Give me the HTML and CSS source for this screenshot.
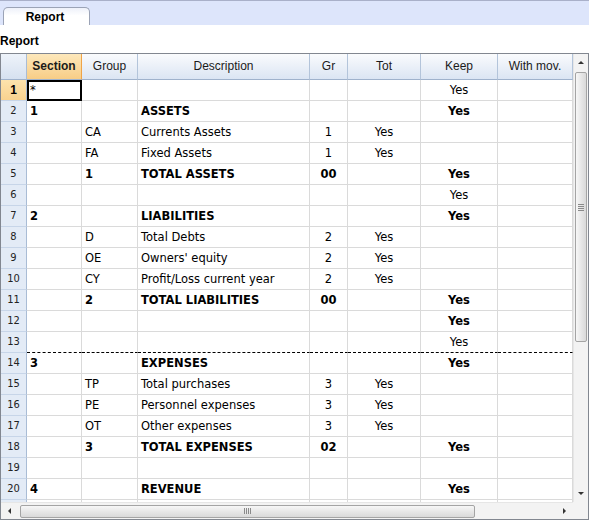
FILE: index.html
```html
<!DOCTYPE html>
<html lang="en">
<head>
    <meta charset="UTF-8">
    <title>Report</title>
    <link rel="stylesheet" href="styles.css">
</head>
<body>
    <div class="tabbar">
        <div class="tab">Report</div>
    </div>
    <div class="title">Report</div>

    <div class="grid">
        <div class="grid-main">
            <div class="sheet">
                <div class="row head">
                    <div class="hcell corner"></div>
                    <div class="hcell active">Section</div>
                    <div class="hcell">Group</div>
                    <div class="hcell">Description</div>
                    <div class="hcell">Gr</div>
                    <div class="hcell">Tot</div>
                    <div class="hcell">Keep</div>
                    <div class="hcell">With mov.</div>
                </div>
                <div class="row"><div class="num sel">1</div><div class="cell current">*</div><div class="cell"></div><div class="cell"></div><div class="cell c"></div><div class="cell c"></div><div class="cell c">Yes</div><div class="cell c"></div></div>
                <div class="row bold"><div class="num">2</div><div class="cell">1</div><div class="cell"></div><div class="cell">ASSETS</div><div class="cell c"></div><div class="cell c"></div><div class="cell c">Yes</div><div class="cell c"></div></div>
                <div class="row"><div class="num">3</div><div class="cell"></div><div class="cell">CA</div><div class="cell">Currents Assets</div><div class="cell c">1</div><div class="cell c">Yes</div><div class="cell c"></div><div class="cell c"></div></div>
                <div class="row"><div class="num">4</div><div class="cell"></div><div class="cell">FA</div><div class="cell">Fixed Assets</div><div class="cell c">1</div><div class="cell c">Yes</div><div class="cell c"></div><div class="cell c"></div></div>
                <div class="row bold"><div class="num">5</div><div class="cell"></div><div class="cell">1</div><div class="cell">TOTAL ASSETS</div><div class="cell c">00</div><div class="cell c"></div><div class="cell c">Yes</div><div class="cell c"></div></div>
                <div class="row"><div class="num">6</div><div class="cell"></div><div class="cell"></div><div class="cell"></div><div class="cell c"></div><div class="cell c"></div><div class="cell c">Yes</div><div class="cell c"></div></div>
                <div class="row bold"><div class="num">7</div><div class="cell">2</div><div class="cell"></div><div class="cell">LIABILITIES</div><div class="cell c"></div><div class="cell c"></div><div class="cell c">Yes</div><div class="cell c"></div></div>
                <div class="row"><div class="num">8</div><div class="cell"></div><div class="cell">D</div><div class="cell">Total Debts</div><div class="cell c">2</div><div class="cell c">Yes</div><div class="cell c"></div><div class="cell c"></div></div>
                <div class="row"><div class="num">9</div><div class="cell"></div><div class="cell">OE</div><div class="cell">Owners' equity</div><div class="cell c">2</div><div class="cell c">Yes</div><div class="cell c"></div><div class="cell c"></div></div>
                <div class="row"><div class="num">10</div><div class="cell"></div><div class="cell">CY</div><div class="cell">Profit/Loss current year</div><div class="cell c">2</div><div class="cell c">Yes</div><div class="cell c"></div><div class="cell c"></div></div>
                <div class="row bold"><div class="num">11</div><div class="cell"></div><div class="cell">2</div><div class="cell">TOTAL LIABILITIES</div><div class="cell c">00</div><div class="cell c"></div><div class="cell c">Yes</div><div class="cell c"></div></div>
                <div class="row bold"><div class="num">12</div><div class="cell"></div><div class="cell"></div><div class="cell"></div><div class="cell c"></div><div class="cell c"></div><div class="cell c">Yes</div><div class="cell c"></div></div>
                <div class="row page-break"><div class="num">13</div><div class="cell"></div><div class="cell"></div><div class="cell"></div><div class="cell c"></div><div class="cell c"></div><div class="cell c">Yes</div><div class="cell c"></div></div>
                <div class="row bold"><div class="num">14</div><div class="cell">3</div><div class="cell"></div><div class="cell">EXPENSES</div><div class="cell c"></div><div class="cell c"></div><div class="cell c">Yes</div><div class="cell c"></div></div>
                <div class="row"><div class="num">15</div><div class="cell"></div><div class="cell">TP</div><div class="cell">Total purchases</div><div class="cell c">3</div><div class="cell c">Yes</div><div class="cell c"></div><div class="cell c"></div></div>
                <div class="row"><div class="num">16</div><div class="cell"></div><div class="cell">PE</div><div class="cell">Personnel expenses</div><div class="cell c">3</div><div class="cell c">Yes</div><div class="cell c"></div><div class="cell c"></div></div>
                <div class="row"><div class="num">17</div><div class="cell"></div><div class="cell">OT</div><div class="cell">Other expenses</div><div class="cell c">3</div><div class="cell c">Yes</div><div class="cell c"></div><div class="cell c"></div></div>
                <div class="row bold"><div class="num">18</div><div class="cell"></div><div class="cell">3</div><div class="cell">TOTAL EXPENSES</div><div class="cell c">02</div><div class="cell c"></div><div class="cell c">Yes</div><div class="cell c"></div></div>
                <div class="row"><div class="num">19</div><div class="cell"></div><div class="cell"></div><div class="cell"></div><div class="cell c"></div><div class="cell c"></div><div class="cell c"></div><div class="cell c"></div></div>
                <div class="row bold"><div class="num">20</div><div class="cell">4</div><div class="cell"></div><div class="cell">REVENUE</div><div class="cell c"></div><div class="cell c"></div><div class="cell c">Yes</div><div class="cell c"></div></div>
                <div class="row"><div class="num"></div><div class="cell"></div><div class="cell"></div><div class="cell"></div><div class="cell c"></div><div class="cell c"></div><div class="cell c"></div><div class="cell c"></div></div>
            </div>
            <div class="vscroll">
                <div class="sbtn"><span class="arrow up"></span></div>
                <div class="vthumb"><span class="grip-h"></span></div>
                <div class="vtrack"></div>
                <div class="sbtn"><span class="arrow down"></span></div>
            </div>
        </div>
        <div class="hscroll">
            <div class="hbar">
                <div class="sbtn-h"><span class="arrow left"></span></div>
                <div class="hthumb"><span class="grip-v"></span></div>
                <div class="htrack"></div>
                <div class="sbtn-h"><span class="arrow right"></span></div>
            </div>
            <div class="scroll-corner"></div>
        </div>
    </div>
</body>
</html>
```

FILE: styles.css
```css
body {
    margin: 0;
    width: 589px;
    height: 520px;
    overflow: hidden;
    background: #fff;
    font-family: "DejaVu Sans", Verdana, sans-serif;
    color: #000;
}
.tabbar {
    height: 24px;
    border-top: 1px solid #a9b0c9;
    background-color: #dde5fb;
    display: flex;
    align-items: flex-end;
    padding-left: 3px;
}
.tab {
    width: 87px;
    height: 18px;
    box-sizing: border-box;
    border: 1px solid #9ba3b6;
    border-bottom: none;
    border-radius: 5px 5px 0 0;
    background: linear-gradient(#eef1fa, #ffffff 45%);
    font: bold 12px "Liberation Sans", Arial, sans-serif;
    text-align: center;
    line-height: 18px;
    padding-right: 3px;
}
.title {
    height: 28px;
    box-sizing: border-box;
    padding-top: 8px;
    font: bold 12px/16px "Liberation Sans", Arial, sans-serif;
}
.grid {
    width: 589px;
    height: 467px;
    box-sizing: border-box;
    border: 1px solid #828790;
}
.grid-main {
    display: flex;
    height: 448px;
}
.sheet {
    width: 572px;
    overflow: hidden;
}
.row {
    display: grid;
    grid-template-columns: 26px 55px 56px 172px 38px 73px 77px 75px;
    height: 21px;
    font-size: 11.5px;
}
.row.bold .cell {
    font-weight: bold;
}
.row.head {
    height: 26px;
}
.hcell {
    box-sizing: border-box;
    border-right: 1px solid #b3c4da;
    border-bottom: 1px solid #9fb2cc;
    background: linear-gradient(#fafbfd, #dbe5f3);
    font: 12px/25px "Liberation Sans", Arial, sans-serif;
    color: #1b1b1b;
    text-align: center;
    white-space: nowrap;
}
.hcell.corner {
    background: linear-gradient(#eef3fa, #d6e1f0);
    border-right-color: #a9bcd5;
}
.hcell.active {
    background: linear-gradient(#fde8bb, #f8cd86);
    border-right-color: #efa448;
    font-weight: bold;
}
.num {
    box-sizing: border-box;
    background-color: #e3ebf6;
    border-right: 1px solid #a9bcd5;
    border-bottom: 1px solid #c7d5e8;
    font-family: "Liberation Sans Narrow", "DejaVu Sans Condensed", "Liberation Sans", sans-serif;
    font-stretch: condensed;
    font-size: 11px;
    line-height: 20px;
    text-align: center;
    color: #222;
}
.num.sel {
    background: linear-gradient(#fde3ad, #f9d28f);
    font: bold 12px/20px "Liberation Sans", Arial, sans-serif;
    color: #000;
}
.cell {
    box-sizing: border-box;
    border-right: 1px solid #dadada;
    border-bottom: 1px solid #dadada;
    padding: 0 3px;
    line-height: 20px;
    white-space: nowrap;
    overflow: hidden;
}
.cell.c {
    text-align: center;
}
.cell.current {
    outline: 2px solid #000;
    outline-offset: -2px;
}
.page-break .cell {
    border-bottom: 1px dashed #000;
}

/* scrollbars */
.vscroll {
    width: 15px;
    display: flex;
    flex-direction: column;
    background-color: #f3f3f3;
    border-left: 1px solid #e6e6e6;
    box-sizing: border-box;
}
.sbtn {
    height: 17px;
    display: flex;
    align-items: center;
    justify-content: center;
}
.vthumb {
    height: 268px;
    margin: 1px 1px 0;
    border: 1px solid #a4a4a4;
    border-radius: 2px;
    background: linear-gradient(to right, #f7f7f7, #e4e4e4 60%, #d9d9d9);
    display: flex;
    align-items: center;
    justify-content: center;
}
.vtrack {
    flex: 1;
}
.grip-h {
    width: 6px;
    height: 7px;
    background: repeating-linear-gradient(#8a8a8a 0 1px, transparent 1px 2px);
}
.hscroll {
    display: flex;
    height: 17px;
}
.hbar {
    width: 572px;
    display: flex;
    align-items: center;
    background-color: #f3f3f3;
    border-top: 1px solid #e6e6e6;
    box-sizing: border-box;
}
.sbtn-h {
    width: 17px;
    height: 100%;
    display: flex;
    align-items: center;
    justify-content: center;
}
.hthumb {
    width: 455px;
    height: 13px;
    margin-left: 2px;
    box-sizing: border-box;
    border: 1px solid #a4a4a4;
    border-radius: 2px;
    background: linear-gradient(#f7f7f7, #e4e4e4 60%, #d9d9d9);
    display: flex;
    align-items: center;
    justify-content: center;
}
.htrack {
    flex: 1;
}
.grip-v {
    width: 7px;
    height: 6px;
    background: repeating-linear-gradient(to right, #8a8a8a 0 1px, transparent 1px 2px);
}
.scroll-corner {
    flex: 1;
    background-color: #f3f3f3;
}
.arrow {
    width: 0;
    height: 0;
}
.arrow.up {
    border-left: 3px solid transparent;
    border-right: 3px solid transparent;
    border-bottom: 3px solid #333;
}
.arrow.down {
    border-left: 3px solid transparent;
    border-right: 3px solid transparent;
    border-top: 3px solid #333;
}
.arrow.left {
    border-top: 3px solid transparent;
    border-bottom: 3px solid transparent;
    border-right: 3px solid #333;
}
.arrow.right {
    border-top: 3px solid transparent;
    border-bottom: 3px solid transparent;
    border-left: 3px solid #333;
}
```
